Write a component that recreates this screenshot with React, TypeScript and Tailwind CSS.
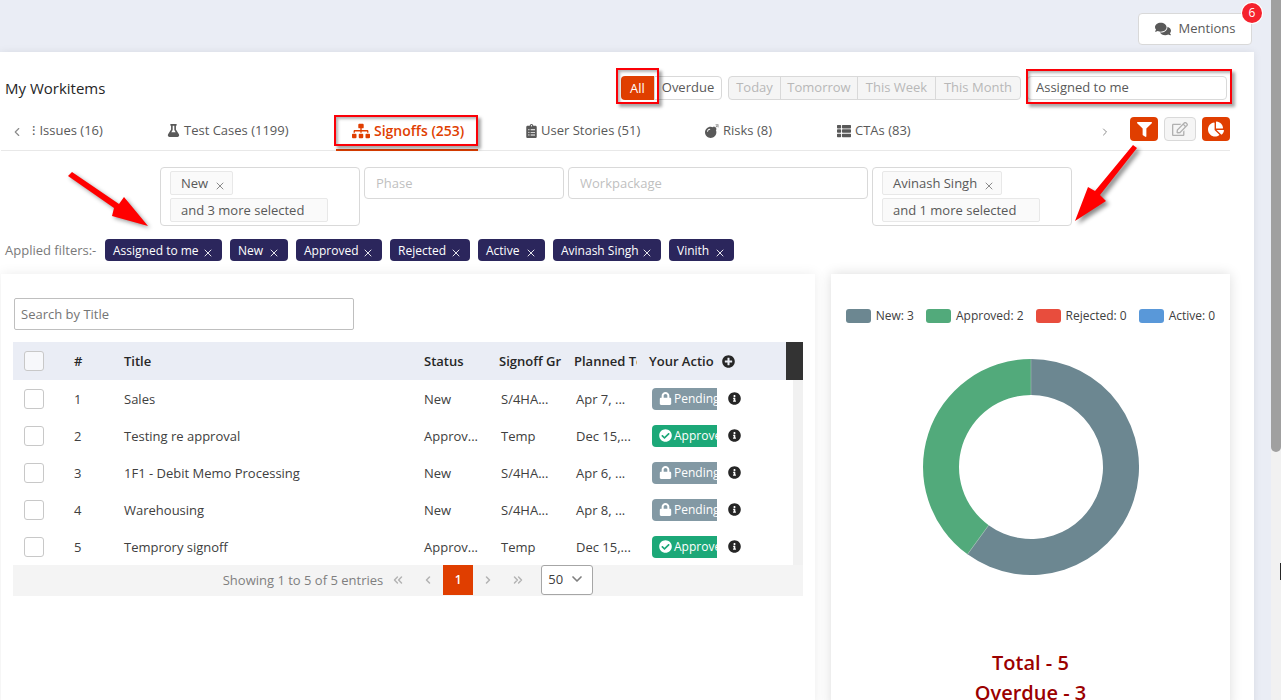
import type { ReactNode } from "react";
import { ChevronDown, ChevronLeft, ChevronRight, ChevronsLeft, ChevronsRight, X } from "lucide-react";
import {
  FaBomb,
  FaChartPie,
  FaCheckCircle,
  FaClipboardList,
  FaComments,
  FaFilter,
  FaFlask,
  FaInfoCircle,
  FaLock,
  FaPlusCircle,
  FaRegEdit,
  FaSitemap,
  FaThList,
} from "react-icons/fa";

const HIGHLIGHT =
  "pointer-events-none absolute border-2 border-[#fb0007] shadow-[3px_3px_3px_rgba(0,0,0,0.35),inset_2px_2px_3px_rgba(0,0,0,0.3)]";

type Tab = { label: string; icon: ReactNode; width: string; active?: boolean };

const tabs: Tab[] = [
  { label: "Issues (16)", icon: <span>⁝</span>, width: "w-[87px]" },
  { label: "Test Cases (1199)", icon: <FaFlask className="size-[13px]" />, width: "w-[153px] pl-4" },
  { label: "Signoffs (253)", icon: <FaSitemap className="size-[18px]" />, width: "w-[142px] pl-4", active: true },
  { label: "User Stories (51)", icon: <FaClipboardList className="h-3.5 w-[11px]" />, width: "w-[147px] pl-4" },
  { label: "Risks (8)", icon: <FaBomb className="size-[14px]" />, width: "w-[100px] pl-4" },
  { label: "CTAs (83)", icon: <FaThList className="size-[14px]" />, width: "w-[107px] pl-4" },
];

const ranges = [
  { label: "Today", width: "w-[51px]" },
  { label: "Tomorrow", width: "w-[77px]" },
  { label: "This Week", width: "w-[78px]" },
  { label: "This Month", width: "w-[85px]" },
];

const chips = [
  { label: "Assigned to me", width: "w-[117px]" },
  { label: "New", width: "w-[58px]" },
  { label: "Approved", width: "w-[86px]" },
  { label: "Rejected", width: "w-[80px]" },
  { label: "Active", width: "w-[67px]" },
  { label: "Avinash Singh", width: "w-[108px]" },
  { label: "Vinith", width: "w-[65px]" },
];

const rows = [
  { title: "Sales", status: "New", group: "S/4HA...", date: "Apr 7, ...", approved: false },
  { title: "Testing re approval", status: "Approv...", group: "Temp", date: "Dec 15,...", approved: true },
  { title: "1F1 - Debit Memo Processing", status: "New", group: "S/4HA...", date: "Apr 6, ...", approved: false },
  { title: "Warehousing", status: "New", group: "S/4HA...", date: "Apr 8, ...", approved: false },
  { title: "Temprory signoff", status: "Approv...", group: "Temp", date: "Dec 15,...", approved: true },
];

const legend = [
  { label: "New: 3", color: "bg-[#6c8791]" },
  { label: "Approved: 2", color: "bg-[#52aa7b]" },
  { label: "Rejected: 0", color: "bg-[#e84d3d]" },
  { label: "Active: 0", color: "bg-[#5998d9]" },
];

function Header() {
  return (
    <header className="flex h-[52px] shrink-0 items-center justify-end pt-1.5 pr-[19px]">
      <button className="relative flex h-8 w-[114px] items-center justify-center gap-2 rounded border border-[#d9d9d9] bg-white text-[13px] text-[#595959]">
        <FaComments className="size-4" />
        Mentions
        <span className="absolute -top-[11px] -right-[11px] flex size-5 items-center justify-center rounded-full bg-[#f5222d] text-xs text-white shadow-[0_0_0_1px_#ffffff]">
          6
        </span>
      </button>
    </header>
  );
}

function TitleBar() {
  return (
    <div className="flex h-6 items-center pr-[3px] pl-[5px]">
      <h1 className="flex-1 text-[15px] text-[#262626]">My Workitems</h1>
      <div className="flex h-6 text-[13px]">
        <button className="relative w-[33px] rounded-l bg-[#e03e00] pt-px text-white">
          All
          <span className={`${HIGHLIGHT} -top-2 -right-[5px] -bottom-1 -left-[5px]`} />
        </button>
        <button className="w-[68px] rounded-r border border-[#d9d9d9] bg-white text-[#595959]">Overdue</button>
      </div>
      <div className="ml-1.5 flex h-6 overflow-hidden rounded border border-[#d9d9d9] bg-[#f5f5f5] text-[13px] text-[#b8b8b8]">
        {ranges.map((range, i) => (
          <button
            key={range.label}
            disabled
            className={`${range.width} whitespace-nowrap ${i > 0 ? "border-l border-[#d9d9d9]" : ""}`}
          >
            {range.label}
          </button>
        ))}
      </div>
      <div className="relative ml-1.5 h-6 w-[200px]">
        <select
          aria-label="Assignment"
          className="block h-6 w-full appearance-none rounded border border-[#d9d9d9] bg-white pl-2 text-[13px] text-[#595959]"
        >
          <option>Assigned to me</option>
        </select>
        <span className={`${HIGHLIGHT} -top-[7px] -right-[5px] -bottom-1 -left-px`} />
      </div>
    </div>
  );
}

function TabBar() {
  return (
    <div className="ml-px flex h-[39px] items-start border-b border-[#e8e8e8]">
      <button aria-label="Previous tabs" className="flex h-10 w-[31px] items-center justify-center text-[#8c8c8c]">
        <ChevronLeft className="size-3.5" />
      </button>
      <nav className="flex flex-1 gap-8">
        {tabs.map((tab) => (
          <button
            key={tab.label}
            className={`relative flex items-center gap-1 whitespace-nowrap ${tab.width} ${
              tab.active
                ? "h-[39px] border-b-2 border-[#e03e00] text-sm font-semibold text-[#e03e00]"
                : "h-[37px] text-[13px] text-[#595959]"
            }`}
          >
            {tab.icon}
            {tab.label}
            {tab.active && <span className={`${HIGHLIGHT} top-[3px] right-0 bottom-[3px] -left-0.5`} />}
          </button>
        ))}
      </nav>
      <button aria-label="Next tabs" className="mr-[19px] flex h-10 w-3 items-center justify-center text-[#8c8c8c]">
        <ChevronRight className="size-3.5" />
      </button>
      <div className="flex gap-1.5 pt-[5px]">
        <button aria-label="Filter" className="flex h-6 w-7 items-center justify-center rounded bg-[#e03e00] text-white">
          <FaFilter className="size-[15px]" />
        </button>
        <button
          aria-label="Edit"
          disabled
          className="flex h-6 w-8 items-center justify-center rounded border border-[#d9d9d9] bg-[#f5f5f5] text-[#b0b0b0]"
        >
          <FaRegEdit className="size-4" />
        </button>
        <button aria-label="Chart" className="flex h-6 w-7 items-center justify-center rounded bg-[#e03e00] text-white">
          <FaChartPie className="size-4" />
        </button>
      </div>
    </div>
  );
}

function TagBox({ name, more }: { name: string; more: string }) {
  return (
    <div className="flex h-[59px] w-[200px] flex-col items-start gap-[3px] rounded border border-[#d9d9d9] px-[9px] py-[3px] text-[13px] text-[#595959]">
      <span className="flex h-6 items-center gap-1.5 rounded-xs border border-[#e8e8e8] bg-[#fafafa] pt-0.5 pr-1.5 pl-2.5 whitespace-nowrap">
        {name}
        <button aria-label={`Remove ${name}`} className="pt-1 text-[#7a7a7a]">
          <X className="size-3" strokeWidth={1.75} />
        </button>
      </span>
      <span className="flex h-6 w-[158px] items-center rounded-xs border border-[#e8e8e8] bg-[#fafafa] pt-0.5 pl-2.5 whitespace-nowrap">
        {more}
      </span>
    </div>
  );
}

function Filters() {
  return (
    <div className="relative mt-4 flex items-start justify-center gap-1 pl-0.5">
      <svg
        className="pointer-events-none absolute top-0 left-[60px] overflow-visible drop-shadow-[2px_2px_2px_rgba(0,0,0,0.4)]"
        width="90"
        height="62"
        viewBox="60 167 90 62"
        aria-hidden="true"
      >
        <polygon points="72,172 119,204 124,197 148,226 112,216 114,208 68,176" fill="#ff0000" />
      </svg>
      <TagBox name="New" more="and 3 more selected" />
      <input
        aria-label="Phase"
        placeholder="Phase"
        className="h-8 w-[200px] rounded border border-[#d9d9d9] px-[11px] text-[13px] placeholder:text-[#bfbfbf]"
      />
      <input
        aria-label="Workpackage"
        placeholder="Workpackage"
        className="h-8 w-[300px] rounded border border-[#d9d9d9] px-[11px] text-[13px] placeholder:text-[#bfbfbf]"
      />
      <TagBox name="Avinash Singh" more="and 1 more selected" />
      <svg
        className="pointer-events-none absolute right-[90px] bottom-0 overflow-visible drop-shadow-[3px_3px_2px_rgba(0,0,0,0.45)]"
        width="70"
        height="86"
        viewBox="1070 140 70 86"
        aria-hidden="true"
      >
        <polygon points="1133,145 1137,148 1100,195 1106,201 1075,221 1088,187 1095,191" fill="#ff0000" />
      </svg>
    </div>
  );
}

function AppliedFilters() {
  return (
    <div className="mt-[13px] flex h-[22px] items-center gap-2 pl-[5px]">
      <span className="w-[92px] pt-0.5 text-[13px] whitespace-nowrap text-[#7a7a7a]">Applied filters:-</span>
      {chips.map((chip) => (
        <span
          key={chip.label}
          className={`flex h-[22px] items-center justify-between rounded bg-[#2b265c] px-2 pt-0.5 text-xs whitespace-nowrap text-white ${chip.width}`}
        >
          {chip.label}
          <button aria-label={`Remove ${chip.label}`} className="pt-1">
            <X className="size-3" strokeWidth={1.75} />
          </button>
        </span>
      ))}
    </div>
  );
}

function Check({ label }: { label: string }) {
  return (
    <input
      type="checkbox"
      aria-label={label}
      className="ml-[11px] block size-5 appearance-none rounded-[3px] border border-[#c8c8c8] bg-white/60"
    />
  );
}

function WorkTable() {
  return (
    <div className="relative">
      <table className="w-full table-fixed text-left text-[13px] whitespace-nowrap text-[#404040]">
        <colgroup>
          <col className="w-[49px]" />
          <col className="w-[50px]" />
          <col />
          <col className="w-[75px]" />
          <col className="w-[75px]" />
          <col className="w-[75px]" />
          <col className="w-[75px]" />
          <col className="w-[74px]" />
          <col className="w-[17px]" />
        </colgroup>
        <thead>
          <tr className="h-[38px] bg-[#eaedf5] text-[#262626] [&>th]:font-semibold">
            <th>
              <Check label="Select all" />
            </th>
            <th className="pt-0.5 pl-3">#</th>
            <th className="pt-0.5 pl-3">Title</th>
            <th className="pt-0.5 pl-3">Status</th>
            <th className="pt-0.5 pl-3">Signoff Gr</th>
            <th className="pt-0.5 pl-3">
              <div className="overflow-hidden">Planned To</div>
            </th>
            <th className="pt-0.5 pl-3">Your Actio</th>
            <th className="pl-2.5">
              <button aria-label="Add column" className="block">
                <FaPlusCircle className="size-[13px]" />
              </button>
            </th>
            <th className="bg-[#333333]" />
          </tr>
        </thead>
        <tbody>
          {rows.map((row, i) => (
            <tr key={row.title} className="h-[37px]">
              <td>
                <Check label={`Select ${row.title}`} />
              </td>
              <td className="pt-0.5 pl-3">{i + 1}</td>
              <td className="pt-0.5 pl-3">{row.title}</td>
              <td className="pt-0.5 pl-3">{row.status}</td>
              <td className="pt-0.5 pl-3.5">{row.group}</td>
              <td className="pt-0.5 pl-3.5">{row.date}</td>
              <td className="pl-[15px]">
                <div
                  className={`flex h-[22px] w-[65px] items-center gap-0.5 overflow-hidden rounded-l pl-[7px] text-xs text-white ${
                    row.approved ? "bg-[#1ca878]" : "bg-[#8399a4]"
                  }`}
                >
                  {row.approved ? (
                    <FaCheckCircle className="size-[13px] shrink-0" />
                  ) : (
                    <FaLock className="size-[13px] shrink-0" />
                  )}
                  <span className="pt-px">{row.approved ? "Approved" : "Pending"}</span>
                </div>
              </td>
              <td className="pl-4">
                <FaInfoCircle className="size-[13px] text-[#262626]" />
              </td>
              <td className="pl-[7px]">
                <div className="h-[37px] bg-[#f1f1f1]" />
              </td>
            </tr>
          ))}
        </tbody>
      </table>
      <div className="flex h-[31px] items-start justify-center bg-[#f4f4f4] text-[13px] text-[#7f7f7f]">
        <span className="leading-[30px]">Showing 1 to 5 of 5 entries</span>
        <button aria-label="First page" className="flex size-[30px] items-center justify-center text-[#b3b3b3]">
          <ChevronsLeft className="size-3.5" strokeWidth={2.5} />
        </button>
        <button aria-label="Previous page" className="flex size-[30px] items-center justify-center text-[#b3b3b3]">
          <ChevronLeft className="size-3" strokeWidth={3} />
        </button>
        <button className="size-[30px] bg-[#e03e00] text-xs font-semibold text-white">1</button>
        <button aria-label="Next page" className="flex size-[30px] items-center justify-center text-[#b3b3b3]">
          <ChevronRight className="size-3" strokeWidth={3} />
        </button>
        <button aria-label="Last page" className="flex size-[30px] items-center justify-center text-[#b3b3b3]">
          <ChevronsRight className="size-3.5" strokeWidth={2.5} />
        </button>
        <div className="relative ml-2">
          <select
            aria-label="Rows per page"
            className="block h-[30px] w-[52px] appearance-none rounded-[3px] border border-[#a6a6a6] bg-white pl-1.5 text-[13px] text-[#404040]"
          >
            <option>50</option>
          </select>
          <ChevronDown
            className="pointer-events-none absolute top-1.5 right-2 size-4 text-[#7f7f7f]"
            strokeWidth={2.5}
          />
        </div>
      </div>
    </div>
  );
}

function ChartPanel() {
  return (
    <section className="flex flex-col items-center bg-white pt-[34px] shadow-[0_0_12px_rgba(0,0,0,0.14)]">
      <ul className="flex h-4 items-center gap-3 text-xs text-[#404040]">
        {legend.map((item) => (
          <li key={item.label} className="flex items-center gap-[5px] whitespace-nowrap">
            <span className={`h-3.5 w-[25px] rounded-[3px] ${item.color}`} />
            {item.label}
          </li>
        ))}
      </ul>
      <svg className="mt-[35px]" width="216" height="216" viewBox="-108 -108 216 216" role="img" aria-label="Signoffs by status">
        <path d="M0-108A108 108 0 1 1-63.48 87.37L-42.32 58.25A72 72 0 1 0 0-72Z" fill="#6c8791" />
        <path d="M-63.48 87.37A108 108 0 0 1 0-108V-72A72 72 0 0 0-42.32 58.25Z" fill="#52aa7b" />
        <path d="M0-108V-72M-63.48 87.37-42.32 58.25" stroke="#a5bdb5" strokeWidth="0.6" />
      </svg>
      <div className="mt-[73px] text-center text-xl leading-[30px] font-semibold text-[#9b0000]">
        <p>Total - 5</p>
        <p>Overdue - 3</p>
      </div>
    </section>
  );
}

export default function App() {
  return (
    <div className="flex h-screen overflow-hidden bg-[#eaedf5] font-['Open_Sans','Noto_Sans',sans-serif]">
      <div className="flex min-w-0 flex-1 flex-col">
        <Header />
        <main className="mr-[17px] flex flex-1 flex-col bg-white pt-6 pr-6 shadow-[0_0_8px_rgba(0,0,0,0.08)]">
          <TitleBar />
          <div className="mt-3">
            <TabBar />
          </div>
          <Filters />
          <AppliedFilters />
          <div className="mt-[13px] ml-px grid flex-1 grid-cols-[minmax(0,1fr)_399px] gap-4">
            <section className="bg-white px-3 pt-6 shadow-[0_0_12px_rgba(0,0,0,0.08)]">
              <input
                aria-label="Search by Title"
                placeholder="Search by Title"
                className="mb-3 ml-px block h-8 w-[340px] rounded-xs border border-[#bfbfbf] px-1.5 text-[13px] placeholder:text-[#757575]"
              />
              <WorkTable />
            </section>
            <ChartPanel />
          </div>
        </main>
      </div>
      <aside className="flex w-2.5 shrink-0 flex-col bg-[#f1f1f1]">
        <div className="h-[452px] rounded-b-full bg-[#a0a0a0]" />
        <div className="mt-[111px] h-[17px] w-px self-end bg-[#262626]" />
      </aside>
    </div>
  );
}
